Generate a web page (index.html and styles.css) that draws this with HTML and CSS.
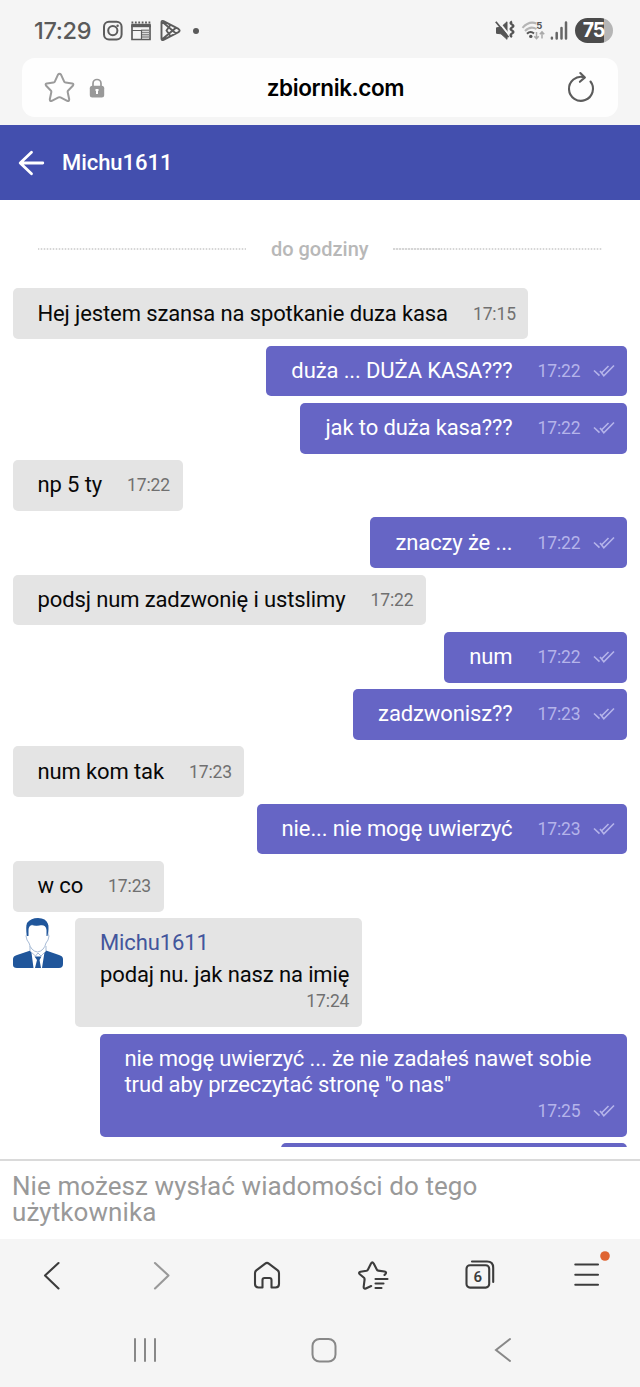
FILE: index.html
```html
<!DOCTYPE html>
<html lang="pl">
<head>
<meta charset="utf-8">
<title>zbiornik.com</title>
<link rel="stylesheet" href="styles.css">
</head>
<body>
<svg width="0" height="0" class="defs">
  <symbol id="read" viewBox="0 0 22 14"><path d="M1 6.500l5.500 5.200M7 7l3.800 4.700L21 1.500M9 8.500L15.500 2" fill="none" stroke="currentColor" stroke-width="1.600"/></symbol>
</svg>
<div class="phone">
  <div class="status">
    <span class="clock">17:29</span>
    <svg class="notif" width="90" height="24" viewBox="0 0 90 24" fill="none" stroke="#5c5c5c" stroke-width="2">
      <rect x="3" y="2.800" width="17.600" height="17.600" rx="5"/><circle cx="11.800" cy="11.600" r="4.600"/><circle cx="16.600" cy="6.800" r="1.200" fill="#5c5c5c" stroke="none"/>
      <path d="M31 7h18v13.500H31z" stroke-width="1.700"/><path d="M30.200 6.500h19.600" stroke-width="3.400"/><path d="M30.500 3.600h19" stroke-width="2" stroke-dasharray="1.800 1.600"/><path d="M40 11.200h8.500M41 13.500h7.500M41 15.800h7.500M41 18.100h7.500" stroke="#8a8a8a" stroke-width="1.500"/><path d="M31 11.500h9.500V20" stroke-width="1.200"/>
      <path d="M60.500 3.500Q60.500 1.300 62.500 2.200L77.500 9.900Q79.800 11.600 77.500 13.100L62.500 20.800Q60.500 21.700 60.500 19.500zM61.500 3L75 14.500M61.500 20L75 8.700M69.500 5.800L65.500 11.500 69.500 17.200" stroke-width="1.900" stroke-linejoin="round"/>
    </svg>
    <span class="dot"></span>
    <svg class="signals" width="76" height="24" viewBox="0 0 76 24" fill="none" stroke="#555" stroke-width="1.600">
      <path d="M1.500 8.800L6 8.300 12 2.800V20.300L6 14.800 1.500 14.300z" fill="#555" stroke-width="1" stroke-linejoin="round"/><path d="M2.200 1.200L14.500 16.500" stroke="#f5f5f5" stroke-width="2"/><path d="M.8 2.800L13.500 18.300" stroke-width="1.800"/><path d="M17 2.500q-2.800 1.500 0 3t0 3 0 3 0 3 0 3.500" stroke-width="2.400"/>
      <path d="M27.500 8.800Q34 1.500 41.500 4.500" stroke="#b5b5b5" stroke-width="2"/><path d="M30 12Q35.500 6.500 41.500 10" stroke="#b5b5b5" stroke-width="2"/><path d="M32 14.800q3.500-3.500 7-.3" stroke-width="2"/><circle cx="35.800" cy="17.400" r="1.700" fill="#555" stroke="none"/><text x="41.300" y="10" class="wifi-five">5</text>
      <path d="M41.500 13v6.500m-2.200-2.200l2.200 2.400 2.200-2.400M47 19.500V13m-2.200 2.300l2.200-2.400 2.200 2.400" stroke="#aaa" stroke-width="1.500"/>
      <path d="M56.900 18.800v.8M61.700 14v5.600M66.500 9v10.600M71 3.500v16.100" stroke="#666" stroke-width="2.500" stroke-linecap="round"/>
    </svg>
    <span class="battery">75</span>
  </div>

  <div class="addressbar">
    <svg width="31" height="32" viewBox="0 0 31 32" fill="none" stroke="#9b9b9b" stroke-width="2" stroke-linejoin="round"><path d="M14 2.700Q15.500.6 17 2.700L20.200 9.700Q20.500 10.500 21.500 10.600L28.200 11.500Q30.200 12 28.800 13.800L24 18.700Q23.500 19.300 23.700 20.200L25.200 27.300Q25.200 29.600 23.200 28.800L16.500 25.400Q15.500 24.900 14.500 25.400L7.800 28.800Q5.800 29.600 5.800 27.300L7.300 20.200Q7.500 19.300 7 18.700L2.200 13.800Q.8 12 2.800 11.500L9.500 10.600Q10.500 10.500 10.800 9.700z"/></svg>
    <svg class="lock" width="16" height="20" viewBox="0 0 16 20"><path d="M4 9V5.500a4 4 0 0 1 8 0V9" fill="none" stroke="#999" stroke-width="1.700"/><rect x=".8" y="7.800" width="14.400" height="11.600" rx="2.500" fill="#999"/><path d="M7 11h2v5H7zM6.500 11h3v2h-3z" fill="#fff"/></svg>
    <span class="url">zbiornik.com</span>
    <svg class="reload" width="30" height="32" viewBox="0 0 30 32" fill="none" stroke="#5c5c5c" stroke-width="2.100" stroke-linecap="round" stroke-linejoin="round"><path d="M25.500 9.500A12 12 0 1 1 19 5.200M15.300 1l4.600 4.400-5 4.400"/></svg>
  </div>

  <div class="chat-header">
    <svg width="27" height="26" viewBox="0 0 27 26" fill="none" stroke="#fff" stroke-width="2.800" stroke-linecap="round" stroke-linejoin="round"><path d="M13.500 2.200L2.200 13l11.300 10.800M2.500 13h22.300"/></svg>
    <span>Michu1611</span>
  </div>

  <div class="chat">
    <div class="divider"><i></i><span>do godziny</span><i></i></div>
    <div class="msg in"><p>Hej jestem szansa na spotkanie duza kasa</p><time>17:15</time></div>
    <div class="msg out"><p>duża ... DUŻA KASA???</p><time>17:22</time><svg class="tick"><use href="#read"/></svg></div>
    <div class="msg out"><p>jak to duża kasa???</p><time>17:22</time><svg class="tick"><use href="#read"/></svg></div>
    <div class="msg in"><p>np 5 ty</p><time>17:22</time></div>
    <div class="msg out"><p>znaczy że ...</p><time>17:22</time><svg class="tick"><use href="#read"/></svg></div>
    <div class="msg in"><p>podsj num zadzwonię i ustslimy</p><time>17:22</time></div>
    <div class="msg out"><p>num</p><time>17:22</time><svg class="tick"><use href="#read"/></svg></div>
    <div class="msg out"><p>zadzwonisz??</p><time>17:23</time><svg class="tick"><use href="#read"/></svg></div>
    <div class="msg in"><p>num kom tak</p><time>17:23</time></div>
    <div class="msg out"><p>nie... nie mogę uwierzyć</p><time>17:23</time><svg class="tick"><use href="#read"/></svg></div>
    <div class="msg in"><p>w co</p><time>17:23</time></div>
    <div class="with-avatar">
      <svg width="50" height="50" viewBox="0 0 50 50">
        <path d="M0 50V41Q0 38 4 37L17.500 32.500 25 36 33 32.500 46 37Q50 38 50 41V46Q50 50 46 50H4Q0 50 0 47z" fill="#20569b"/>
        <path d="M18 31L25 35 32 31 29 50H20.500z" fill="#fff"/>
        <path d="M17 28v5l5.500 5 2.500-3 3 3 5-5v-5" fill="#fff" stroke="#91a9ca" stroke-width=".8"/>
        <path d="M14 16q-2 1 0 6l2 3q2 8 8.500 9 6.500-1 8.500-9l2-3q2-5 0-6V7H14z" fill="#fff" stroke="#91a9ca" stroke-width=".8"/>
        <path d="M14 18Q12.500 9 14 5 18 0 25 0q8 0 10 6 1 4-.500 12H33.500V12Q33 7 28 7q-5 1.500-9-.200Q15.500 8 15.500 12V18z" fill="#20569b"/>
        <path d="M21.500 38.500H28.500L26.500 42 28 50H22L24 42z" fill="#20569b"/>
      </svg>
      <div class="quote"><b>Michu1611</b><p>podaj nu. jak nasz na imię</p><time>17:24</time></div>
    </div>
    <div class="long"><p>nie mogę uwierzyć ... że nie zadałeś nawet sobie<br>trud aby przeczytać stronę "o nas"</p><div class="meta"><time>17:25</time><svg class="tick"><use href="#read"/></svg></div></div>
    <div class="next"></div>
  </div>

  <div class="composer">Nie możesz wysłać wiadomości do tego<br>użytkownika</div>

  <div class="toolbar">
    <svg viewBox="0 0 32 32"><path d="M21.500 3L8 15.500 21.500 28.500"/></svg>
    <svg viewBox="0 0 32 32" class="dim"><path d="M11 3l13.500 12.500L11 28.500"/></svg>
    <svg viewBox="0 0 32 32"><path d="M14.200 3.600Q16 2.200 17.800 3.600L26.700 10.300Q28 11.300 28 13.300V24Q28 27.500 24.500 27.500H20.500V20Q20.500 18 18.500 18H13.500Q11.500 18 11.500 20V27.500H7.500Q4 27.500 4 24V13.300Q4 11.300 5.300 10.300z"/></svg>
    <svg viewBox="0 0 32 32"><path d="M14.200 26L8.800 28.500Q6.400 29.200 6.700 26.500L7.600 19.500Q7.700 18.500 7 17.800L2.500 14Q1.300 12.300 3.500 11.700L9.500 10.700Q10.500 10.500 11 9.500L14 3.500Q15.300 1.200 16.700 3.500L19.800 9.500Q20.200 10.500 21.200 10.600L27.500 11.500Q30 12 28.400 14L27.500 15M18.500 19h12M18.500 23.500h8M18.500 28h6"/></svg>
    <svg viewBox="0 0 32 32"><rect x="2.500" y="5.300" width="22.700" height="22.300" rx="3.500"/><path d="M8 1.500h15Q29.200 1.500 29.200 7.700V22"/><text x="13.800" y="21.800" text-anchor="middle" class="tab-count">6</text></svg>
    <svg viewBox="0 0 32 32"><path d="M4.300 4.500h22.700M4.300 14.700h22.700M4.300 24.800h22.700"/><circle class="badge" cx="34" cy="-4" r="4.800"/></svg>
  </div>
  <div class="navbar">
    <svg viewBox="0 0 28 28"><path d="M4 3v22M14 3v22M24 3v22"/></svg>
    <svg viewBox="0 0 28 28"><rect x="2.500" y="3" width="23" height="22.500" rx="7"/></svg>
    <svg viewBox="0 0 28 28"><path d="M21 3L7 14l14 11"/></svg>
  </div>
</div>
</body>
</html>
```
FILE: styles.css
```css
* { box-sizing: border-box; }
body { margin: 0; background: #fff; font-family: Roboto, "Noto Sans", sans-serif; }
p { margin: 0; }
svg { display: block; flex: none; overflow: visible; }
.defs { position: absolute; }
.phone { width: 640px; height: 1387px; display: flex; flex-direction: column; overflow: hidden; background: #f5f5f5; }

.status { height: 58px; padding: 3px 27px 0 34px; display: flex; align-items: center; color: #5a5a5a; }
.clock { width: 67px; font: 500 23.500px/28px Inter, sans-serif; letter-spacing: -.3px; white-space: nowrap; }
.dot { width: 6px; height: 6px; margin-left: 2px; border-radius: 50%; background: #5a5a5a; }
.signals { margin-left: auto; margin-right: 4px; }
.wifi-five { font: 700 9.500px Inter, sans-serif; fill: #555; stroke: none; }
.battery { width: 38px; height: 25px; padding-right: 1px; border-radius: 13px; background: linear-gradient(to right, #4b4b4b 76%, #b5b5b5 76%); color: #fff; font: 700 19.500px/25px Inter, sans-serif; text-align: center; letter-spacing: -1px; }

.addressbar { height: 59px; margin: 0 22px 8px; padding: 0 23px 0 22px; border-radius: 13px; background: #fefefe; display: flex; align-items: center; }
.lock { margin-left: 14px; }
.url { flex: 1; text-align: center; margin-left: 37px; color: #000; font: 600 22.500px/30px Inter, sans-serif; letter-spacing: -.4px; }
.reload { margin-left: 36px; }

.chat-header { height: 75px; padding: 0 18px; display: flex; align-items: center; gap: 17px; background: #434fae; color: #fff; font-size: 22px; font-weight: 500; letter-spacing: -.05px; }

.chat { height: 959px; flex: none; padding: 0 13px 0 12.500px; overflow: hidden; background: #fff; border-bottom: 12px solid #fff; display: flex; flex-direction: column; gap: 6.500px; }
.divider { height: 81.750px; flex: none; padding: 17px 25px 0; display: flex; align-items: center; gap: 24.500px; color: #b8b8b8; font-size: 20px; font-weight: 500; }
.divider span { white-space: nowrap; }
.divider i { flex: 1; height: 2px; background: repeating-linear-gradient(to right, #d6d6d6 0 1.500px, #f4f4f4 1.500px 3px); }
.msg { height: 50.750px; flex: none; display: flex; align-items: center; padding: 0 12.500px 0 25px; border-radius: 5px; font-size: 22px; line-height: 26px; letter-spacing: -.12px; white-space: nowrap; }
.in { align-self: flex-start; background: #e4e4e4; color: #080808; }
.out { align-self: flex-end; background: #6665c5; color: #fff; }
time { margin-left: 25px; font-size: 17.500px; line-height: 22px; letter-spacing: -.12px; color: #707070; }
.out time, .meta time { color: #b5b4ea; }
.tick { width: 22px; height: 14px; margin-left: 12px; color: #b5b4ea; }
.with-avatar { flex: none; display: flex; align-items: flex-start; gap: 12.500px; }
.quote { height: 109px; padding: 12px 12.500px 0 25px; border-radius: 5px; background: #e4e4e4; display: flex; flex-direction: column; color: #080808; font-size: 22px; letter-spacing: -.12px; }
.quote b { font-weight: 400; line-height: 26px; color: #42559c; }
.quote p { margin-top: 6px; line-height: 26px; }
.quote time { align-self: flex-end; margin-top: 2px; }
.long { align-self: flex-end; width: 527.500px; height: 103px; flex: none; padding: 12px 12.500px 0 25px; border-radius: 5px; background: #6665c5; color: #fff; font-size: 22px; line-height: 26px; letter-spacing: -.12px; white-space: nowrap; }
.meta { display: flex; justify-content: flex-end; align-items: center; margin-top: 2px; }
.next { align-self: flex-end; flex: none; width: 346px; height: 51px; border-radius: 5px; background: #6665c5; }

.composer { height: 80px; flex: none; padding: 12px 12px 0; border-top: 2px solid #dadada; background: #fff; color: #999; font-size: 26px; line-height: 26px; letter-spacing: .07px; }
.toolbar { height: 74px; flex: none; display: grid; grid-template-columns: repeat(6, 106.700px); align-items: center; justify-items: center; }
.toolbar svg { width: 32px; height: 32px; fill: none; stroke: #3c3c3c; stroke-width: 2.100; stroke-linecap: round; stroke-linejoin: round; }
.toolbar .dim { stroke: #999; }
.toolbar .badge { fill: #df6432; stroke: none; }
.tab-count { font: 600 15px Roboto, sans-serif; fill: #3c3c3c; stroke: none; }
.navbar { height: 74px; flex: none; padding-left: 55px; display: grid; grid-template-columns: repeat(3, 179.300px); align-items: center; justify-items: center; }
.navbar svg { width: 28px; height: 28px; fill: none; stroke: #888; stroke-width: 2; stroke-linecap: round; }
```
